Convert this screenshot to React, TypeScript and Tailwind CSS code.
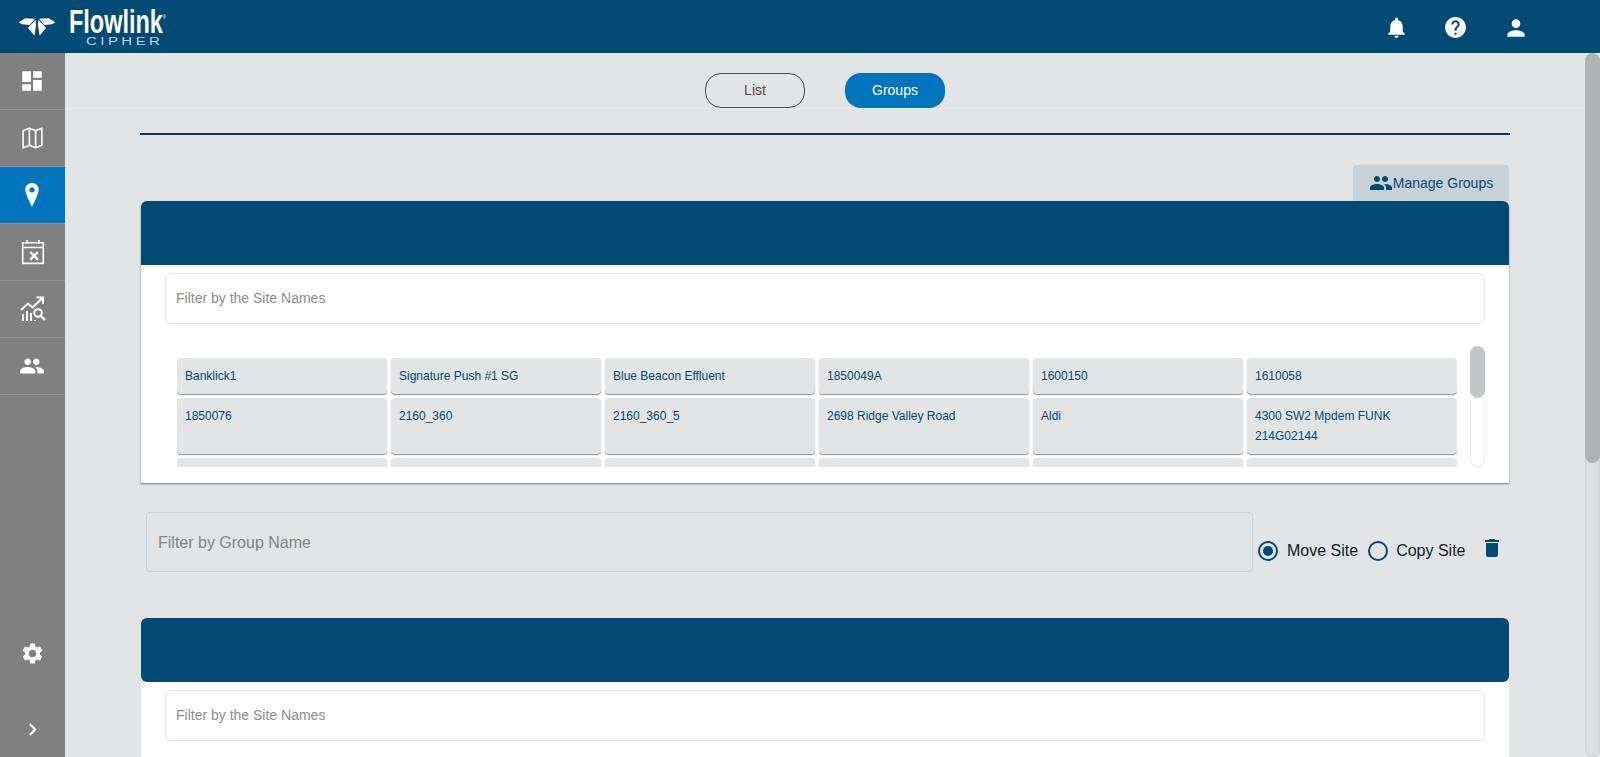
import React from "react";

const F = "[font-family:'Liberation_Sans',Arial,sans-serif]";

const P = {
  dash: "M3 13h8V3H3v10zm0 8h8v-6H3v6zm10 0h8V11h-8v10zm0-18v6h8V3h-8z",
  people: "M16 11c1.66 0 2.99-1.34 2.99-3S17.66 5 16 5c-1.66 0-3 1.34-3 3s1.34 3 3 3zm-8 0c1.66 0 2.99-1.34 2.99-3S9.66 5 8 5C6.34 5 5 6.34 5 8s1.34 3 3 3zm0 2c-2.33 0-7 1.17-7 3.5V19h14v-2.5c0-2.33-4.67-3.5-7-3.5zm8 0c-.29 0-.62.02-.97.05 1.16.84 1.97 1.97 1.97 3.45V19h6v-2.5c0-2.33-4.67-3.5-7-3.5z",
  gear: "M19.14 12.94c.04-.3.06-.61.06-.94 0-.32-.02-.64-.07-.94l2.03-1.58c.18-.14.23-.41.12-.61l-1.92-3.32c-.12-.22-.37-.29-.59-.22l-2.39.96c-.5-.38-1.03-.7-1.62-.94l-.36-2.54c-.04-.24-.24-.41-.48-.41h-3.84c-.24 0-.43.17-.47.41l-.36 2.54c-.59.24-1.13.57-1.62.94l-2.39-.96c-.22-.08-.47 0-.59.22L2.74 8.87c-.12.21-.08.47.12.61l2.03 1.58c-.05.3-.09.63-.09.94s.02.64.07.94l-2.03 1.58c-.18.14-.23.41-.12.61l1.92 3.32c.12.22.37.29.59.22l2.39-.96c.5.38 1.03.7 1.62.94l.36 2.54c.05.24.24.41.48.41h3.84c.24 0 .44-.17.47-.41l.36-2.54c.59-.24 1.13-.56 1.62-.94l2.39.96c.22.08.47 0 .59-.22l1.92-3.32c.12-.22.07-.47-.12-.61l-2.01-1.58zM12 15.6c-1.98 0-3.6-1.62-3.6-3.6s1.62-3.6 3.6-3.6 3.6 1.62 3.6 3.6-1.62 3.6-3.6 3.6z",
  bell: "M12 22c1.1 0 2-.9 2-2h-4c0 1.1.89 2 2 2zm6-6v-5c0-3.07-1.64-5.64-4.5-6.32V4c0-.83-.67-1.5-1.5-1.5s-1.5.67-1.5 1.5v.68C7.63 5.36 6 7.92 6 11v5l-2 2v1h16v-1l-2-2z",
  help: "M12 2C6.48 2 2 6.48 2 12s4.48 10 10 10 10-4.48 10-10S17.52 2 12 2zm1 17h-2v-2h2v2zm2.07-7.75l-.9.92C13.45 12.9 13 13.5 13 15h-2v-.5c0-1.1.45-2.1 1.17-2.83l1.24-1.26c.37-.36.59-.86.59-1.41 0-1.1-.9-2-2-2s-2 .9-2 2H8c0-2.21 1.79-4 4-4s4 1.79 4 4c0 .88-.36 1.68-.93 2.25z",
  person: "M12 12c2.21 0 4-1.79 4-4s-1.79-4-4-4-4 1.79-4 4 1.79 4 4 4zm0 2c-2.67 0-8 1.34-8 4v2h16v-2c0-2.66-5.33-4-8-4z",
  trash: "M6 19c0 1.1.9 2 2 2h8c1.1 0 2-.9 2-2V7H6v12zM19 4h-3.5l-1-1h-5l-1 1H5v2h14V4z",
};

function Mi({ d, cls }: { d: string; cls: string }) {
  return (
    <svg viewBox="0 0 24 24" className={cls} fill="currentColor">
      <path d={d} />
    </svg>
  );
}

function Logo() {
  return (
    <div className="flex items-center pl-[17px] h-full">
      <svg viewBox="20 36 120 60" className="w-[40px] h-[20px] text-white" fill="currentColor">
        <path d="M25 52 45 40 74 41 58 60 35 58Z" />
        <path d="M135 52 115 40 86 41 102 60 125 58Z" />
        <path d="M76 44 53 68 72 92 77 62Z" />
        <path d="M84 44 107 68 88 92 83 62Z" />
      </svg>
      <div className="relative ml-[12px] w-[100px] h-[53px]">
        <span className="absolute left-0 top-[3px] origin-left scale-x-[0.69] text-[34px] leading-[28px] font-bold text-white whitespace-nowrap">
          Flowlink<span className="text-[6px] font-normal align-[14px]">®</span>
        </span>
        <span className="absolute left-[17px] top-[37px] text-[10px] leading-[9px] tracking-[2.3px] text-[#b9d8e8] whitespace-nowrap origin-left scale-x-[1.5]">
          CIPHER
        </span>
      </div>
    </div>
  );
}

const Side = ({ children, active }: { children: React.ReactNode; active?: boolean }) => (
  <div className={`h-[57px] border-b border-[#939393] flex items-center justify-center text-white ${active ? "bg-[#0074bd]" : ""}`}>
    {children}
  </div>
);

const row1 = ["Banklick1", "Signature Push #1 SG", "Blue Beacon Effluent", "1850049A", "1600150", "1610058"];
const row2 = ["1850076", "2160_360", "2160_360_5", "2698 Ridge Valley Road", "Aldi", "4300 SW2 Mpdem FUNK 214G02144"];

function Chip({ t }: { t: string }) {
  return (
    <div className="bg-[#e2e4e6] rounded-[4px] px-2 py-2 min-h-[36px] text-[12px] leading-[20px] text-[#004a76] shadow-[0_1px_1px_#8f8f8f]">
      {t}
    </div>
  );
}

function FilterInput() {
  return (
    <input
      placeholder="Filter by the Site Names"
      className="block w-[1320px] h-[51px] ml-[24px] pl-[10px] pr-[10px] pb-[2px] bg-white border border-[#dde8ee] rounded-[5px] text-[14px] outline-none placeholder:text-[#8c8c8c]"
    />
  );
}

function Radio({ on, label, gap }: { on?: boolean; label: string; gap: string }) {
  return (
    <div className={`flex items-center ${gap}`}>
      <div className="w-[20px] h-[20px] rounded-full border-[2.5px] border-[#004a76] flex items-center justify-center">
        {on && <div className="w-[10px] h-[10px] rounded-full bg-[#004a76]" />}
      </div>
      <span className="text-[16px] leading-[20px] text-[#101a26]">{label}</span>
    </div>
  );
}

export default function App() {
  return (
    <div className={`h-screen flex flex-col overflow-hidden bg-[#e2e4e6] ${F}`}>
      <header className="h-[53px] shrink-0 bg-[#004a76] flex items-center justify-between">
        <Logo />
        <div className="flex items-center text-white mr-[71px] mt-[2px]">
          <Mi d={P.bell} cls="w-[25px] h-[25px]" />
          <Mi d={P.help} cls="w-[25px] h-[25px] ml-[34px]" />
          <Mi d={P.person} cls="w-[26px] h-[26px] ml-[35px]" />
        </div>
      </header>

      <div className="flex-1 flex min-h-0">
        <aside className="w-[65px] shrink-0 bg-[#808080] flex flex-col">
          <Side><Mi d={P.dash} cls="w-[26px] h-[26px] -ml-px" /></Side>
          <Side>
            <svg viewBox="0 0 24 24" className="w-[25px] h-[26px]" fill="none" stroke="currentColor" strokeWidth="1.5" strokeLinejoin="round">
              <path d="M3 5 9 2.5l6 2.5 6-2.5v16.5l-6 2.5-6-2.5L3 21.5Z" />
              <path d="M9 2.5V19M15 5v16.5" />
            </svg>
          </Side>
          <Side active>
            <svg viewBox="0 0 14 24" className="w-[14px] h-[24px] -ml-[2px]" fill="currentColor">
              <path fillRule="evenodd" d="M7 0C3 0 .3 2.9.3 6.6.3 11 7 24 7 24s6.7-13 6.7-17.4C13.7 2.9 11 0 7 0Zm0 4.2a2.6 2.6 0 1 1 0 5.2 2.6 2.6 0 0 1 0-5.2Z" />
            </svg>
          </Side>
          <Side>
            <svg viewBox="0 0 24 24" className="w-[26px] h-[26px]" fill="none" stroke="currentColor" strokeWidth="1.5">
              <path d="M2.5 3.5h19v19h-19ZM2.5 7.8h19M6.5 1v3.5M17.5 1v3.5" />
              <path d="m9.5 12 7 7M16.5 12l-7 7" strokeWidth="2.2" />
            </svg>
          </Side>
          <Side>
            <svg viewBox="0 0 26 26" className="w-[26px] h-[26px]" fill="none" stroke="currentColor" strokeWidth="2">
              <path d="M1 14 8 7.5l4.5 4L22 2.5" />
              <path d="M16.5 1.5H23V8" />
              <path d="M3 18v7M7 15v10M11 17v8M15 24v1" strokeWidth="2" />
              <circle cx="18" cy="17" r="3.8" />
              <path d="m21 20 4 4" strokeWidth="2.4" />
            </svg>
          </Side>
          <Side><Mi d={P.people} cls="w-[26px] h-[26px] -ml-[2px]" /></Side>
          <div className="mt-auto flex flex-col items-center text-white">
            <Mi d={P.gear} cls="w-[25px] h-[25px] mb-[57px] -ml-px" />
            <svg viewBox="0 0 10 14" className="w-[9px] h-[13px] mb-[21px]" fill="none" stroke="currentColor" strokeWidth="2.4">
              <path d="m2 1 6 6-6 6" />
            </svg>
          </div>
        </aside>

        <main className="flex-1 min-w-0 overflow-hidden">
          <div className="h-[56px] pt-[20px] border-b border-[#e8e9ea] flex justify-center gap-[40px]">
            <div className="w-[100px] h-[35px] rounded-[16px] border border-[#4a4a4a] flex items-center justify-center text-[14px] text-[#5a4a46]">List</div>
            <div className="w-[100px] h-[35px] rounded-[16px] bg-[#0074bd] flex items-center justify-center text-[14px] text-white">Groups</div>
          </div>

          <div className="px-[75px]">
            <div className="mt-[24px] h-[2px] bg-[#0f2d5f]" />

            <div className="mt-[30px] flex justify-end pr-px">
              <div className="w-[156px] h-[36px] rounded-t-[4px] bg-[#c9d1d8] flex items-center justify-center text-[14px] text-[#004a76]">
                <Mi d={P.people} cls="w-[24px] h-[24px]" />
                <span>Manage Groups</span>
              </div>
            </div>

            <section className="mx-px bg-white rounded-t-[6px] h-[282px] shadow-[0_1px_2px_#7a7a7a]">
              <div className="h-[64px] bg-[#004a76] rounded-t-[6px]" />
              <div className="h-[8px]" />
              <FilterInput />
              <div className="mt-[22px] ml-[36px] mr-[24px] h-[121px] flex justify-between">
                <div className="h-full overflow-hidden pt-[12px]">
                  <div className="grid grid-cols-[repeat(6,210px)] auto-rows-min gap-[4px]">
                    {row1.map((t) => <Chip key={t} t={t} />)}
                    {row2.map((t) => <Chip key={t} t={t} />)}
                    {row1.map((t) => <Chip key={t + "x"} t="" />)}
                  </div>
                </div>
                <div className="w-[15px] h-full rounded-full shadow-[inset_0_0_2px_#c4c4c4] overflow-hidden">
                  <div className="h-[52px] rounded-full bg-[#c3c4c6]" />
                </div>
              </div>
            </section>

            <div className="mt-[29px] flex items-start">
              <input
                placeholder="Filter by Group Name"
                className="ml-[6px] w-[1107px] h-[60px] pl-[11px] pr-[11px] pt-[2px] bg-[#e2e4e6] border border-[#c9d3da] rounded-[4px] text-[16px] outline-none placeholder:text-[#858585]"
              />
              <div className="ml-[5px] mt-[29px] flex items-center">
                <Radio on label="Move Site" gap="gap-[9px]" />
                <div className="ml-[10px]">
                  <Radio label="Copy Site" gap="gap-[8px]" />
                </div>
                <Mi d={P.trash} cls="w-[24px] h-[24px] text-[#004a76] ml-[14px] -mt-[6px]" />
              </div>
            </div>

            <section className="mx-px mt-[46px] bg-white rounded-t-[6px] h-[200px]">
              <div className="h-[64px] bg-[#004a76] rounded-[6px]" />
              <div className="h-[8px]" />
              <FilterInput />
            </section>
          </div>
        </main>

        <div className="w-[15px] shrink-0 rounded-full bg-[#dfe0e2] shadow-[inset_0_0_3px_#bdbec0] overflow-hidden">
          <div className="h-[410px] rounded-full bg-[#b1b2b4]" />
        </div>
      </div>
    </div>
  );
}
